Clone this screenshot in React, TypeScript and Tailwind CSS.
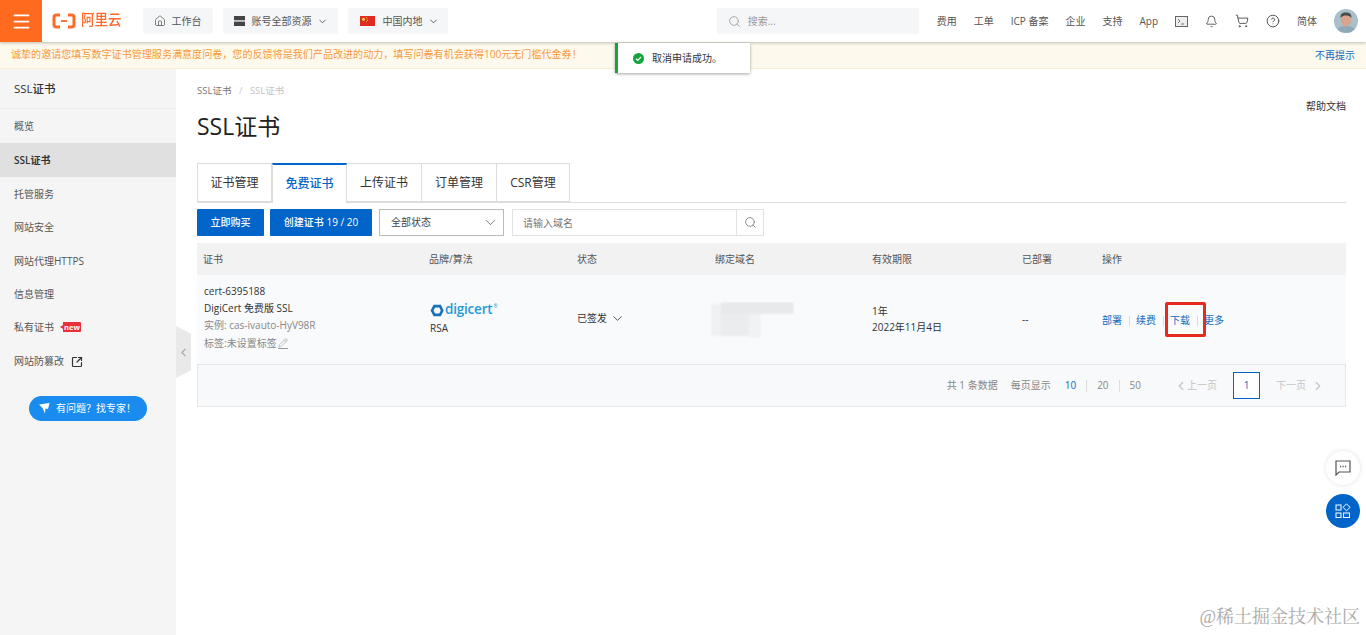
import { Bell, ChevronDown, ChevronLeft, ChevronRight, CircleHelp, Home, Menu, Pencil, Search, ShoppingCart, SquareArrowOutUpRight } from "lucide-react";

const font = { fontFamily: '"Open Sans","Noto Sans CJK SC",sans-serif' };

function Logo() {
  return (
    <div className="ml-[10px] flex items-center gap-[5px] text-[#ff6a2a]">
      <svg width="24" height="16" viewBox="0 0 24 16" fill="none">
        <path d="M8 2H4.500C3 2 2 3 2 4.500v7C2 13 3 14 4.500 14H8M16 2h3.500C21 2 22 3 22 4.500v7c0 1.500-1 2.500-2.500 2.500H16" stroke="#ff6a2a" strokeWidth="3" />
        <path d="M9 8h6" stroke="#ff6a2a" strokeWidth="1.800" />
      </svg>
      <span className="scale-y-110 text-[13.500px] font-medium leading-none">阿里云</span>
    </div>
  );
}

function Flag() {
  return (
    <svg width="15" height="10" viewBox="0 0 15 10">
      <rect width="15" height="10" fill="#e02b20" />
      <circle cx="3.500" cy="3.200" r="1.500" fill="#ffd84a" />
      <circle cx="6.500" cy="1.500" r=".5" fill="#ffd84a" />
      <circle cx="7.300" cy="3" r=".5" fill="#ffd84a" />
      <circle cx="7.300" cy="4.600" r=".5" fill="#ffd84a" />
      <circle cx="6.300" cy="5.800" r=".5" fill="#ffd84a" />
    </svg>
  );
}

function Header() {
  return (
    <header className="relative z-10 flex h-[42px] items-center bg-white text-[10px] shadow-[0_1px_3px_rgba(0,0,0,0.25)]">
      <div className="flex h-[42px] w-[42px] items-center justify-center bg-[#ff6a1f]">
        <Menu size={21} color="#fff" strokeWidth={2} />
      </div>
      <Logo />
      <div className="ml-[21px] flex h-[26px] w-[70px] items-center gap-[6px] rounded-[2px] bg-[#f5f6f8] pl-[11px] text-[#555]">
        <Home size={12} strokeWidth={1.500} />
        <span>工作台</span>
      </div>
      <div className="ml-[10px] flex h-[26px] w-[115px] items-center gap-[7px] rounded-[2px] bg-[#f5f6f8] pl-[11px] text-[#555]">
        <svg width="11" height="10" viewBox="0 0 11 10"><rect width="11" height="4.300" fill="#444" /><rect y="5.600" width="11" height="4.400" fill="#444" /></svg>
        <span>账号全部资源</span>
        <ChevronDown size={11} className="ml-[-2px]" />
      </div>
      <div className="ml-[10px] flex h-[26px] w-[100px] items-center gap-[8px] rounded-[2px] bg-[#f5f6f8] pl-[12px] text-[#555]">
        <Flag />
        <span>中国内地</span>
        <ChevronDown size={11} className="ml-[-3px]" />
      </div>
      <div className="ml-auto flex h-[26px] w-[202px] items-center gap-[7px] bg-[#f5f6f8] pl-[11px] text-[#999]">
        <Search size={13} strokeWidth={1.500} />
        <span>搜索...</span>
      </div>
      <div className="ml-[18px] mr-[8px] flex items-center gap-[17px] text-[#555]">
        <span>费用</span>
        <span>工单</span>
        <span>ICP 备案</span>
        <span>企业</span>
        <span>支持</span>
        <span>App</span>
        <svg width="13" height="11" viewBox="0 0 13 11" fill="none"><rect x=".5" y=".5" width="12" height="10" fill="#eee" stroke="#666" /><path d="M3 3l2 2-2 2M6 8h3" stroke="#555" strokeWidth=".8" /></svg>
        <Bell size={13} strokeWidth={1.500} color="#444" />
        <ShoppingCart size={14} strokeWidth={1.500} color="#444" />
        <CircleHelp size={14} strokeWidth={1.500} color="#444" />
        <span>简体</span>
        <svg width="24" height="24" viewBox="0 0 24 24">
          <clipPath id="av"><circle cx="12" cy="12" r="12" /></clipPath>
          <g clipPath="url(#av)">
            <rect width="24" height="24" fill="#a9bfca" />
            <path d="M2 24c1-6 5-7 10-7s9 1 10 7z" fill="#8fa9b8" />
            <ellipse cx="12" cy="11" rx="5" ry="6.500" fill="#d8a58c" />
            <path d="M6.500 9C6.500 4 9 3.500 12 3.500S17.500 4 17.500 9C16 7 14 6.500 12 6.500S8 7 6.500 9z" fill="#4a4a48" />
          </g>
        </svg>
      </div>
    </header>
  );
}

function Banner() {
  return (
    <div className="flex h-[27px] items-center justify-between border-b border-[#f6efd2] bg-[#fdf9ec] pl-[11px] pr-[11px] text-[10px]">
      <span className="text-[10.070px] text-[#f79a3e]">诚挚的邀请您填写数字证书管理服务满意度问卷，您的反馈将是我们产品改进的动力，填写问卷有机会获得100元无门槛代金券！</span>
      <span className="text-[#0f6cc0]">不再提示</span>
    </div>
  );
}

const menu = ["概览", "SSL证书", "托管服务", "网站安全", "网站代理HTTPS", "信息管理"];

function Sidebar() {
  return (
    <aside className="w-[176px] shrink-0 bg-[#f5f5f6] text-[10px] text-[#555]">
      <div className="flex h-[40px] items-center border-b border-[#ececec] pl-[14px] text-[11.500px] font-medium text-[#333]">SSL证书</div>
      <div className="flex flex-col">
        {menu.map((m, i) => (
          <div
            key={m}
            className={i === 1 ? "flex h-[34px] items-center bg-[#e0e0e0] pl-[14px] pt-[2px] font-semibold text-[#333]" : "flex h-[33.500px] items-center pl-[14px] pt-[2px]"}
          >
            {m}
          </div>
        ))}
        <div className="flex h-[33.500px] items-center pl-[14px]">
          <span>私有证书</span>
          <span className="relative ml-[9px] flex h-[10px] w-[18px] items-center justify-center rounded-r-[1px] bg-[#e8303a] text-[7.500px] font-bold leading-none text-white">
            <span className="absolute left-[-3px] top-[2.500px] h-0 w-0 border-y-[2.500px] border-r-[3px] border-y-transparent border-r-[#e8303a]" />
            new
          </span>
        </div>
        <div className="flex h-[33.500px] items-center pl-[14px] pt-[2px]">
          <span>网站防篡改</span>
          <SquareArrowOutUpRight size={12} strokeWidth={2.400} className="ml-[7px] text-[#333]" />
        </div>
      </div>
      <div className="mt-[18px] flex justify-center pr-px">
        <div className="flex h-[25px] w-[118px] items-center justify-center gap-[6px] rounded-full bg-[#1a8cf0] text-white">
          <svg width="11" height="11" viewBox="0 0 11 11"><path d="M0 1.500L10.500 0 9 6 6.500 5.500 6 10.500 3.500 5z" fill="#fff" /></svg>
          <span>有问题？找专家！</span>
        </div>
      </div>
    </aside>
  );
}

const tabs = [
  ["证书管理", "w-[75px]"],
  ["免费证书", "w-[75px]"],
  ["上传证书", "w-[75px]"],
  ["订单管理", "w-[75px]"],
  ["CSR管理", "w-[73px]"],
];

function Tabs() {
  return (
    <div className="mt-[19px] flex h-[40px] border-b border-[#dcdcdc] text-[12px] text-[#333]">
      {tabs.map(([t, w], i) => (
        <div
          key={t}
          className={
            i === 1
              ? `${w} z-[1] flex h-[40px] items-center justify-center border-x border-t-2 border-x-[#dcdcdc] border-t-[#0064c8] bg-white font-medium text-[#0064c8]`
              : `${w} flex h-[39px] items-center justify-center border-y border-r border-[#dcdcdc] ${i === 0 ? "border-l" : ""}`
          }
        >
          {t}
        </div>
      ))}
    </div>
  );
}

function Toolbar() {
  return (
    <div className="mt-[6px] flex h-[27px] text-[10px]">
      <div className="flex w-[67px] items-center justify-center rounded-[1px] bg-[#0064c8] font-medium text-white">立即购买</div>
      <div className="ml-[6px] flex w-[102px] items-center justify-center rounded-[1px] bg-[#0064c8] font-medium text-white">创建证书 19 / 20</div>
      <div className="ml-[7px] flex w-[125px] items-center justify-between border border-[#bbb] pl-[11px] pr-[4px] text-[#444]">
        <span>全部状态</span>
        <ChevronDown size={17} strokeWidth={1.200} color="#666" />
      </div>
      <div className="ml-[8px] flex w-[252px] border border-[#e2e2e2] text-[#777]">
        <div className="flex flex-1 items-center pl-[10px] pt-[2px]">请输入域名</div>
        <div className="flex w-[27px] items-center justify-center border-l border-[#e2e2e2]">
          <Search size={13} strokeWidth={1.500} color="#777" />
        </div>
      </div>
    </div>
  );
}

function Digicert() {
  return (
    <div className="flex items-center gap-[1px] text-[#1f9ad6]">
      <svg width="14" height="13" viewBox="0 0 16 15" fill="none">
        <path d="M5 2.500h6.500L14 7.500l-2.500 5H5L2.300 7.500z" stroke="#1870b8" strokeWidth="3" />
      </svg>
      <span className="text-[13.500px] font-semibold leading-none tracking-[-0.2px]">digicert</span>
      <span className="mb-[8px] text-[5px] leading-none">®</span>
    </div>
  );
}

function Blur() {
  return (
    <svg width="84" height="36" viewBox="0 0 84 36">
      <defs><filter id="bl"><feGaussianBlur stdDeviation="1" /></filter></defs>
      <g filter="url(#bl)">
        <rect x="1" y="2" width="10" height="32" fill="#f0f1f3" />
        <rect x="11" y="0" width="73" height="12" fill="#e8e9eb" />
        <rect x="11" y="12" width="28" height="22" fill="#ebecee" />
        <rect x="39" y="12" width="12" height="24" fill="#f1f2f4" />
      </g>
    </svg>
  );
}

function Table() {
  return (
    <div className="relative mt-[7px] text-[10px] text-[#555]">
      <div className="flex h-[32px] items-center bg-[#f2f2f2]">
        <div className="w-[225px] pl-[6px]">证书</div>
        <div className="w-[148px] pl-[7px]">品牌/算法</div>
        <div className="w-[138px] pl-[7px]">状态</div>
        <div className="w-[157px] pl-[7px]">绑定域名</div>
        <div className="w-[150px] pl-[7px]">有效期限</div>
        <div className="w-[80px] pl-[7px]">已部署</div>
        <div className="pl-[7px]">操作</div>
      </div>
      <div className="flex h-[90px] items-center border-b border-[#e4e6e8] bg-[#f8fafc] text-[#333]">
        <div className="mb-[5px] flex w-[225px] flex-col gap-[2.500px] pl-[7px] leading-[14.500px]">
          <div>cert-6395188</div>
          <div>DigiCert 免费版 SSL</div>
          <div className="text-[#888]">实例: cas-ivauto-HyV98R</div>
          <div className="mt-[1.500px] flex items-center text-[#888]">
            标签:未设置标签
            <span className="ml-[1px] border-b border-[#999] leading-none">
              <Pencil size={10} strokeWidth={1.200} />
            </span>
          </div>
        </div>
        <div className="flex w-[148px] flex-col gap-[4px] pl-[8px]">
          <Digicert />
          <div>RSA</div>
        </div>
        <div className="mb-[3px] flex w-[138px] items-center gap-[3px] pl-[7px]">
          已签发
          <ChevronDown size={15} strokeWidth={1.300} />
        </div>
        <div className="w-[157px] pl-[2px]"><Blur /></div>
        <div className="w-[150px] pl-[7px] leading-[15.500px]">
          <div>1年</div>
          <div>2022年11月4日</div>
        </div>
        <div className="w-[80px] pl-[7px]">--</div>
        <div className="flex items-center pl-[7px] pt-[2px] text-[#0f6cc0]">
          <span>部署</span>
          <span className="mx-[6.500px] h-[10px] w-px bg-[#ddd]" />
          <span>续费</span>
          <span className="mx-[6.500px] h-[10px] w-px bg-[#ddd]" />
          <span>下载</span>
          <span className="mx-[6.500px] h-[10px] w-px bg-[#ddd]" />
          <span>更多</span>
        </div>
      </div>
      <div className="flex h-[42px] items-center justify-end border-x border-b border-[#e8e8e8] bg-[#f7f9fa] pr-[20px] text-[#888]">
        <span>共 1 条数据</span>
        <span className="ml-[13px]">每页显示</span>
        <span className="ml-[14px] text-[#0f6cc0]">10</span>
        <span className="mx-[10px] h-[12px] w-px bg-[#ddd]" />
        <span>20</span>
        <span className="mx-[10px] h-[12px] w-px bg-[#ddd]" />
        <span>50</span>
        <span className="ml-[33px] flex items-center text-[#c4c4c4]"><ChevronLeft size={14} className="mr-[-1px]" />上一页</span>
        <span className="ml-[16px] flex h-[27px] w-[27px] items-center justify-center border border-[#0064c8] bg-white text-[#0f6cc0]">1</span>
        <span className="ml-[16px] flex items-center text-[#c4c4c4]">下一页<ChevronRight size={14} className="ml-[5px]" /></span>
      </div>
      <div className="absolute left-[968px] top-[59px] h-[35px] w-[41px] rounded-[2px] border-[3px] border-[#e62a1e]" />
    </div>
  );
}

function Main() {
  return (
    <main className="relative flex-1 pl-[21px] pr-[20px] pt-[16px] text-[#333]">
      <div className="text-[9.500px] leading-[12px] text-[#777]">
        SSL证书<span className="mx-[7.500px] text-[#ccc]">/</span><span className="text-[#c4c4c4]">SSL证书</span>
      </div>
      <div className="mt-[11px] flex items-start justify-between">
        <h1 className="text-[23px] font-normal leading-[36px] text-[#222]">SSL证书</h1>
        <span className="mt-[-9px] text-[10px]">帮助文档</span>
      </div>
      <Tabs />
      <Toolbar />
      <Table />
      {/* collapse handle */}
      <div className="absolute left-0 top-[257px] flex h-[52px] w-[15px] items-center justify-center bg-[#e9e9e9] [clip-path:polygon(0_0,100%_15%,100%_85%,0_100%)]">
        <ChevronLeft size={13} color="#aaa" strokeWidth={2} />
      </div>
    </main>
  );
}

export default function App() {
  return (
    <div style={font} className="relative flex h-[635px] w-[1366px] flex-col overflow-hidden bg-white">
      <Header />
      <Banner />
      <div className="flex flex-1">
        <Sidebar />
        <Main />
      </div>
      {/* toast */}
      <div className="absolute left-[615px] top-[43px] z-20 flex h-[30px] w-[135px] items-center gap-[8px] border-l-[3px] border-[#12a53c] bg-white pl-[15px] text-[10px] text-[#333] shadow-[0_1px_3px_rgba(0,0,0,0.35)]">
        <svg width="11" height="11" viewBox="0 0 11 11"><circle cx="5.500" cy="5.500" r="5.500" fill="#12a53c" /><path d="M3 5.700l1.800 1.600L8 4" stroke="#fff" strokeWidth="1.200" fill="none" /></svg>
        <span>取消申请成功。</span>
      </div>
      {/* floating */}
      <div className="absolute left-[1326px] top-[451px] flex h-[34px] w-[34px] items-center justify-center rounded-full bg-white shadow-[0_0_5px_rgba(0,0,0,0.12)]">
        <svg width="16" height="16" viewBox="0 0 16 16" fill="none"><path d="M1 1h14v11H4l-3 3z" stroke="#555" strokeWidth="1.200" /><path d="M5 6.500h1.200M7.500 6.500h1.200M10 6.500h1.200" stroke="#555" strokeWidth="1.500" /></svg>
      </div>
      <div className="absolute left-[1326px] top-[494px] flex h-[34px] w-[34px] items-center justify-center rounded-full bg-[#0064c8]">
        <svg width="16" height="16" viewBox="0 0 16 16" fill="none" stroke="#fff" strokeWidth="1"><rect x="1" y="2" width="5" height="5" /><path d="M11.500 .8l3.500 3.500-3.500 3.500L8 4.300z" /><rect x="1" y="10" width="5" height="4.500" /><rect x="8.500" y="10" width="6" height="4.500" /></svg>
      </div>
      <div className="absolute right-[6px] top-[604px] whitespace-nowrap text-[18px] leading-[26px] text-[#aaa]" style={{ fontFamily: '"Liberation Serif","Noto Serif CJK SC","Noto Sans CJK SC",serif' }}>
        @稀土掘金技术社区
      </div>
    </div>
  );
}
